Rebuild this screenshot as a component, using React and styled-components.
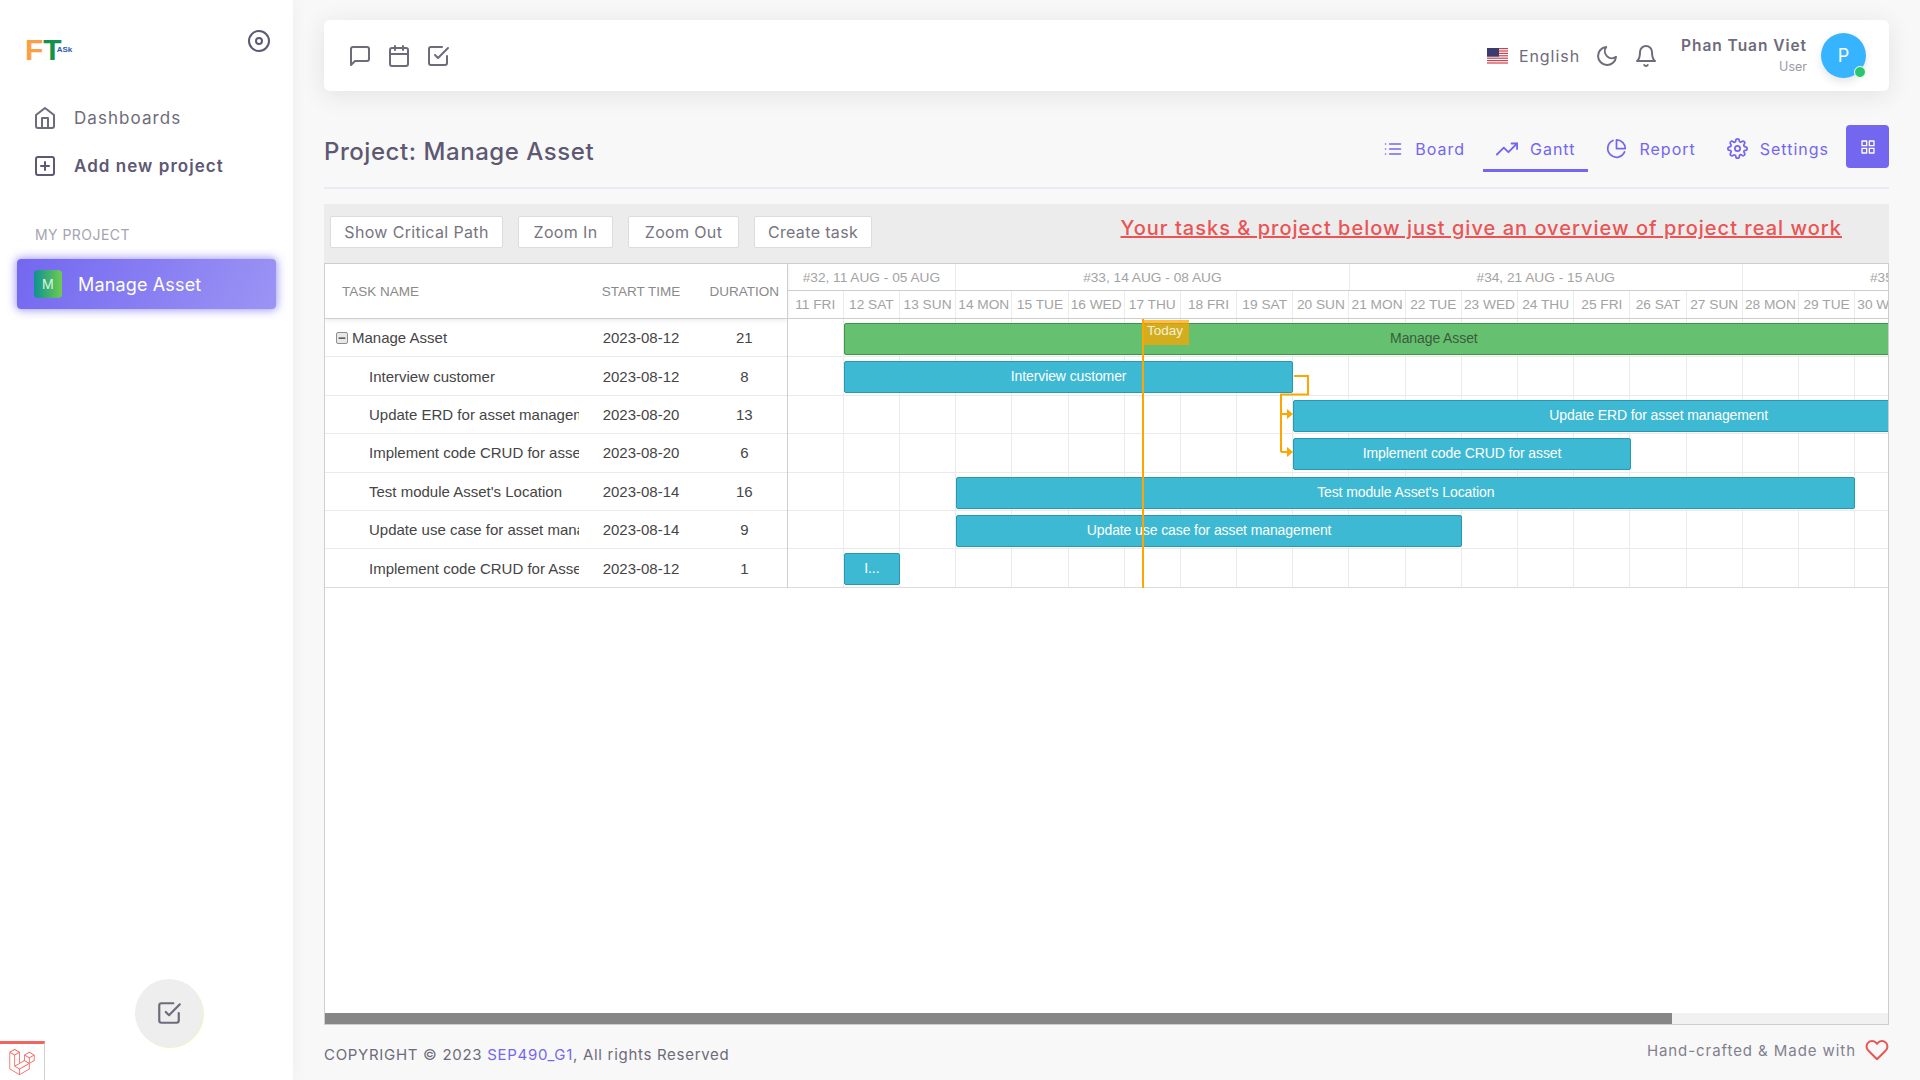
import React from 'react';
import styled, { createGlobalStyle } from 'styled-components';
import {
  FiDisc, FiHome, FiPlusSquare, FiCheckSquare, FiMessageSquare, FiCalendar,
  FiMoon, FiBell, FiList, FiTrendingUp, FiPieChart, FiSettings, FiGrid, FiHeart, FiMinus,
} from 'react-icons/fi';
import { FaLaravel } from 'react-icons/fa';

const COL = 56.2;
const ROW = 38.4;

const GlobalStyle = createGlobalStyle`
  html, body { margin: 0; padding: 0; height: 100%; }
  body {
    background: #f8f8f8;
    color: #6e6b7b;
    font-family: Inter, "Noto Sans", sans-serif;
    overflow: hidden;
  }
  * { box-sizing: border-box; }
`;

const Page = styled.div`
  display: flex;
  width: 1920px;
  height: 1080px;
  position: relative;
`;

const Sidebar = styled.aside`
  width: 293px;
  flex: none;
  background: #fff;
  box-shadow: 0 0 15px rgba(34, 41, 47, 0.05);
  display: flex;
  flex-direction: column;
  padding: 29px 17px 33px;
`;

const SidebarTop = styled.div`
  display: flex;
  justify-content: space-between;
  align-items: flex-start;
  padding: 0 5px 0 8px;
  height: 65px;
  color: #5e5873;
`;

const Logo = styled.div`
  display: flex;
  align-items: flex-end;
  height: 33px;
  font-family: "Liberation Sans", sans-serif;
  font-weight: 700;
  line-height: 24px;
`;

const LogoLetter = styled.span`
  font-size: ${p => p.$size}px;
  color: ${p => p.$color};
  margin-left: ${p => p.$shift || 0}px;
`;

const NavItem = styled.div`
  display: flex;
  align-items: center;
  height: 48px;
  padding-left: 16px;
  gap: 17px;
  font-size: 17px;
  letter-spacing: 1.05px;
  font-weight: ${p => (p.$bold ? 600 : 400)};
  color: ${p => (p.$bold ? '#5e5873' : '#6e6b7b')};
`;

const SectionLabel = styled.div`
  margin: 36px 0 0 18px;
  height: 33px;
  font-size: 14px;
  line-height: 18px;
  letter-spacing: 0.45px;
  color: #a6a4b0;
`;

const ActiveProject = styled.div`
  display: flex;
  align-items: center;
  height: 50px;
  padding-left: 17px;
  gap: 16px;
  border-radius: 4px;
  color: #fff;
  font-size: 18px;
  letter-spacing: 0.15px;
  background: linear-gradient(118deg, #7367f0, rgba(115, 103, 240, 0.7));
  box-shadow: 0 0 10px 1px rgba(115, 103, 240, 0.7);
`;

const ProjectBadge = styled.span`
  width: 28px;
  height: 28px;
  border-radius: 4px;
  display: flex;
  align-items: center;
  justify-content: center;
  font-size: 13px;
  color: #d8f5e4;
  background: linear-gradient(90deg, #0f9191, #6ecb4f);
`;

const FloatButton = styled.button`
  margin: auto 0 0 118px;
  width: 68px;
  height: 68px;
  border: none;
  border-radius: 50%;
  background: #eeeeee;
  color: #6e6b7b;
  display: flex;
  align-items: center;
  justify-content: center;
  box-shadow: 1px 1px 0 #f3f3c8;
`;

const DebugBadge = styled.div`
  position: absolute;
  left: 0;
  bottom: 0;
  width: 45px;
  height: 39px;
  background: #fff;
  border-top: 3px solid #f4645f;
  border-right: 1px solid #d1d1d1;
  color: #f4645f;
  display: flex;
  align-items: center;
  justify-content: center;
`;

const Main = styled.main`
  flex: 1;
  min-width: 0;
  padding: 20px 31px 0 31px;
  display: flex;
  flex-direction: column;
`;

const Navbar = styled.header`
  height: 71px;
  flex: none;
  background: #fff;
  border-radius: 6px;
  box-shadow: 0 4px 24px rgba(34, 41, 47, 0.1);
  display: flex;
  align-items: center;
  padding: 0 23px 0 24px;
  color: #6e6b7b;
`;

const NavIcons = styled.div`
  display: flex;
  gap: 15px;
  margin-right: auto;
`;

const FlagBox = styled.svg`
  display: block;
  margin-right: 11px;
`;

const LangLabel = styled.span`
  font-size: 16px;
  letter-spacing: 0.95px;
  margin-right: 15px;
`;

const IconGap = styled.span`
  display: flex;
  margin-right: ${p => p.$right}px;
`;

const UserBlock = styled.div`
  display: flex;
  flex-direction: column;
  align-items: flex-end;
  margin-right: 14px;
`;

const UserName = styled.span`
  font-size: 15.5px;
  font-weight: 600;
  letter-spacing: 0.95px;
  line-height: 22px;
  color: #6e6b7b;
`;

const UserRole = styled.span`
  font-size: 12.5px;
  line-height: 20px;
  color: #9c9aa6;
`;

const Avatar = styled.div`
  position: relative;
  width: 45px;
  height: 45px;
  border-radius: 50%;
  background: #37b4ff;
  color: #fff;
  font-size: 18px;
  display: flex;
  align-items: center;
  justify-content: center;
  box-shadow: 0 4px 8px rgba(34, 41, 47, 0.12);
`;

const StatusDot = styled.span`
  position: absolute;
  right: 0;
  bottom: 0;
  width: 12px;
  height: 12px;
  border-radius: 50%;
  background: #28c76f;
  border: 1px solid #fff;
`;

const TitleRow = styled.div`
  flex: none;
  height: 64px;
  margin-top: 34px;
  border-bottom: 2px solid #ebe9f1;
  display: flex;
  align-items: flex-start;
`;

const PageTitle = styled.h1`
  margin: 12px auto 0 0;
  font-size: 24px;
  line-height: 30px;
  font-weight: 500;
  letter-spacing: 0.55px;
  color: #5e5873;
`;

const Tabs = styled.nav`
  display: flex;
  gap: 5px;
  margin-right: 4px;
`;

const Tab = styled.div`
  height: 47px;
  padding: 3px 13px 0;
  display: flex;
  align-items: center;
  gap: 12px;
  color: #7367f0;
  font-size: 16px;
  letter-spacing: 1px;
  border-bottom: 3px solid ${p => (p.$active ? '#7367f0' : 'transparent')};
`;

const GridButton = styled.button`
  width: 43px;
  height: 43px;
  border: none;
  border-radius: 4px;
  background: #7367f0;
  color: #fff;
  display: flex;
  align-items: center;
  justify-content: center;
  padding: 0;
`;

const Toolbar = styled.div`
  flex: none;
  height: 59px;
  margin-top: 15px;
  background: #ececec;
  display: flex;
  align-items: flex-start;
  padding: 12px 47px 0 6px;
  gap: 15px;
`;

const ToolButton = styled.button`
  width: ${p => p.$width}px;
  height: 32px;
  padding: 0;
  background: #fff;
  border: 1px solid #dcdcdc;
  border-radius: 2px;
  font-family: inherit;
  font-size: 16px;
  letter-spacing: 0.35px;
  color: #77757f;
`;

const Notice = styled.a`
  margin-left: auto;
  font-size: 20px;
  line-height: 24px;
  font-weight: 500;
  letter-spacing: 1.01px;
  color: #ea5455;
  text-decoration: underline;
`;

const Gantt = styled.section`
  flex: none;
  height: 762px;
  background: #fff;
  border: 1px solid #cecece;
  display: flex;
  flex-direction: column;
  font-family: "Liberation Sans", Arial, sans-serif;
  overflow: hidden;
`;

const GanttBody = styled.div`
  flex: 1;
  min-height: 0;
  display: flex;
`;

const GridPane = styled.div`
  width: 461.6px;
  flex: none;
`;

const GridHead = styled.div`
  height: 55px;
  display: grid;
  grid-template-columns: 265px 102px 94.6px;
  align-items: center;
  border-bottom: 1px solid #cecece;
  box-shadow: 0 1px 5px rgba(0, 0, 0, 0.1);
  font-size: 13.5px;
  color: #8a8a8a;
`;

const HeadCell = styled.div`
  text-align: ${p => (p.$left ? 'left' : 'center')};
  padding-left: ${p => p.$indent || 0}px;
`;

const GridRow = styled.div`
  height: ${ROW}px;
  display: grid;
  grid-template-columns: 265px 102px 94.6px;
  align-items: center;
  border-bottom: 1px solid #ebebeb;
  font-size: 15px;
  color: #454545;

  &:nth-child(8) {
    border-bottom-color: #dcdcdc;
  }
`;

const NameCell = styled.div`
  display: flex;
  align-items: center;
  overflow: hidden;
  white-space: nowrap;
  margin-right: 11px;
  padding-left: ${p => (p.$root ? '11px' : '44px')};
`;

const Toggle = styled.span`
  flex: none;
  width: 12px;
  height: 12px;
  margin-right: 4px;
  border: 1px solid #8f8f8f;
  border-radius: 2px;
  background: #e8e8e8;
  color: #333;
  display: flex;
  align-items: center;
  justify-content: center;
`;

const ValueCell = styled.div`
  text-align: center;
  padding-left: ${p => p.$indent || 0}px;
`;

const Timeline = styled.div`
  flex: 1;
  min-width: 0;
  overflow: hidden;
`;

const ScaleRow = styled.div`
  display: flex;
  height: ${p => p.$height}px;
  border-left: 1px solid #cecece;
  border-bottom: 1px solid #cecece;
  font-size: 13.7px;
  color: #a3a3a3;
`;

const ScaleCell = styled.div`
  flex: none;
  width: ${p => p.$span * COL}px;
  border-right: 1px solid #ebebeb;
  display: flex;
  align-items: center;
  justify-content: center;
  white-space: nowrap;
`;

const Chart = styled.div`
  position: relative;
  border-left: 1px solid #cecece;
`;

const ChartRow = styled.div`
  position: relative;
  height: ${ROW}px;
  display: flex;
  border-bottom: 1px solid #ebebeb;

  &:nth-child(7) {
    border-bottom-color: #dcdcdc;
  }
`;

const ChartCell = styled.div`
  flex: none;
  width: ${COL}px;
  border-right: 1px solid #ebebeb;
`;

const Bar = styled.div`
  position: absolute;
  top: 4px;
  height: 32px;
  left: ${p => p.$start * COL}px;
  width: ${p => p.$span * COL}px;
  padding-bottom: 2px;
  border-radius: 2px;
  border: 1px solid ${p => (p.$project ? '#3c9445' : '#2898b0')};
  background: ${p => (p.$project ? '#65c16f' : '#3db9d3')};
  color: ${p => (p.$project ? '#3c5a3e' : '#fff')};
  font-size: 14px;
  letter-spacing: -0.1px;
  display: flex;
  align-items: center;
  justify-content: center;
  white-space: nowrap;
  overflow: hidden;
`;

const TodayLine = styled.div`
  position: absolute;
  top: 0;
  bottom: 0;
  left: 354.5px;
  width: 2px;
  background: #ffa500;
`;

const TodayLabel = styled.div`
  position: absolute;
  top: 1px;
  left: 354.5px;
  width: 47px;
  height: 25px;
  padding: 3px 0 0 5px;
  background: rgba(255, 165, 0, 0.72);
  color: #f4f0d8;
  font-size: 13.5px;
  line-height: 16px;
`;

const LinkLayer = styled.svg`
  position: absolute;
  left: 0;
  top: 0;
  pointer-events: none;
`;

const ScrollTrack = styled.div`
  flex: none;
  height: 11px;
  background: #f1f1f1;
`;

const ScrollThumb = styled.div`
  width: 1347px;
  height: 100%;
  background: #868686;
`;

const Footer = styled.footer`
  flex: 1;
  display: flex;
  justify-content: space-between;
  align-items: flex-start;
  padding-top: 20px;
  font-size: 15px;
  letter-spacing: 0.7px;
  color: #6e6b7b;
`;

const FooterLink = styled.span`
  color: #7367f0;
`;

const MadeWith = styled.span`
  display: flex;
  align-items: center;
  gap: 9px;
  margin-top: -7px;
  letter-spacing: 0.93px;
  color: #82808f;
`;

const HeartIcon = styled(FiHeart)`
  color: #ea5455;
`;

const weeks = [
  { label: '#32, 11 AUG - 05 AUG', span: 3 },
  { label: '#33, 14 AUG - 08 AUG', span: 7 },
  { label: '#34, 21 AUG - 15 AUG', span: 7 },
  { label: '#35, 28 AUG - 22 AUG', span: 7 },
];

const days = [
  '11 FRI', '12 SAT', '13 SUN', '14 MON', '15 TUE', '16 WED', '17 THU', '18 FRI', '19 SAT', '20 SUN',
  '21 MON', '22 TUE', '23 WED', '24 THU', '25 FRI', '26 SAT', '27 SUN', '28 MON', '29 TUE', '30 WED',
];

const tasks = [
  { name: 'Manage Asset', date: '2023-08-12', duration: 21, start: 1, span: 21, project: true },
  { name: 'Interview customer', date: '2023-08-12', duration: 8, start: 1, span: 8 },
  { name: 'Update ERD for asset management', date: '2023-08-20', duration: 13, start: 9, span: 13 },
  { name: 'Implement code CRUD for asset', date: '2023-08-20', duration: 6, start: 9, span: 6 },
  { name: "Test module Asset's Location", date: '2023-08-14', duration: 16, start: 3, span: 16 },
  { name: 'Update use case for asset management', date: '2023-08-14', duration: 9, start: 3, span: 9 },
  { name: 'Implement code CRUD for Asset', date: '2023-08-12', duration: 1, start: 1, span: 1, short: 'I...' },
];

function UsFlag() {
  const stripes = [0, 1, 2, 3, 4, 5, 6];
  return (
    <FlagBox width="21" height="16" viewBox="0 0 21 16">
      <rect width="21" height="16" fill="#fff" />
      {stripes.map(i => (
        <rect key={i} y={i * 2.4} width="21" height="1.2" fill="#c8434f" />
      ))}
      <rect width="12" height="8.6" fill="#3c3b6e" />
    </FlagBox>
  );
}

function DependencyLinks() {
  return (
    <LinkLayer width="560" height="268" fill="none">
      <path d="M506 57 H520 V75.5 H493 V133" stroke="#ffa500" strokeWidth="2" />
      <path d="M493 95 H500 M493 133 H500" stroke="#ffa500" strokeWidth="2" />
      <path d="M499 90 L505 95 L499 100 Z M499 128 L505 133 L499 138 Z" fill="#ffa500" />
    </LinkLayer>
  );
}

function GanttChart() {
  return (
    <Gantt>
      <GanttBody>
        <GridPane>
          <GridHead>
            <HeadCell $left $indent={17}>TASK NAME</HeadCell>
            <HeadCell>START TIME</HeadCell>
            <HeadCell $indent={10}>DURATION</HeadCell>
          </GridHead>
          {tasks.map(t => (
            <GridRow key={t.name}>
              <NameCell $root={t.project}>
                {t.project && (
                  <Toggle>
                    <FiMinus size={10} strokeWidth={3} />
                  </Toggle>
                )}
                {t.name}
              </NameCell>
              <ValueCell>{t.date}</ValueCell>
              <ValueCell $indent={10}>{t.duration}</ValueCell>
            </GridRow>
          ))}
        </GridPane>
        <Timeline>
          <ScaleRow $height={27}>
            {weeks.map(w => (
              <ScaleCell key={w.label} $span={w.span}>{w.label}</ScaleCell>
            ))}
          </ScaleRow>
          <ScaleRow $height={28}>
            {days.map(d => (
              <ScaleCell key={d} $span={1}>{d}</ScaleCell>
            ))}
          </ScaleRow>
          <Chart>
            {tasks.map(t => (
              <ChartRow key={t.name}>
                {days.map(d => (
                  <ChartCell key={d} />
                ))}
                <Bar $start={t.start} $span={t.span} $project={t.project}>{t.short || t.name}</Bar>
              </ChartRow>
            ))}
            <DependencyLinks />
            <TodayLine />
            <TodayLabel>Today</TodayLabel>
          </Chart>
        </Timeline>
      </GanttBody>
      <ScrollTrack>
        <ScrollThumb />
      </ScrollTrack>
    </Gantt>
  );
}

export default function App() {
  return (
    <Page>
      <GlobalStyle />
      <Sidebar>
        <SidebarTop>
          <Logo>
            <LogoLetter $size={30} $color="#fb9f45">F</LogoLetter>
            <LogoLetter $size={30} $color="#14914b">T</LogoLetter>
            <LogoLetter $size={8} $color="#2d5aa8" $shift={-5}>ASk</LogoLetter>
          </Logo>
          <FiDisc size={24} />
        </SidebarTop>
        <NavItem>
          <FiHome size={24} />
          Dashboards
        </NavItem>
        <NavItem $bold>
          <FiPlusSquare size={24} />
          Add new project
        </NavItem>
        <SectionLabel>MY PROJECT</SectionLabel>
        <ActiveProject>
          <ProjectBadge>M</ProjectBadge>
          Manage Asset
        </ActiveProject>
        <FloatButton>
          <FiCheckSquare size={26} />
        </FloatButton>
      </Sidebar>
      <DebugBadge>
        <FaLaravel size={26} />
      </DebugBadge>
      <Main>
        <Navbar>
          <NavIcons>
            <FiMessageSquare size={24} />
            <FiCalendar size={24} />
            <FiCheckSquare size={24} />
          </NavIcons>
          <UsFlag />
          <LangLabel>English</LangLabel>
          <IconGap $right={15}><FiMoon size={24} /></IconGap>
          <IconGap $right={23}><FiBell size={24} /></IconGap>
          <UserBlock>
            <UserName>Phan Tuan Viet</UserName>
            <UserRole>User</UserRole>
          </UserBlock>
          <Avatar>
            P
            <StatusDot />
          </Avatar>
        </Navbar>
        <TitleRow>
          <PageTitle>Project: Manage Asset</PageTitle>
          <Tabs>
            <Tab><FiList size={20} />Board</Tab>
            <Tab $active><FiTrendingUp size={22} />Gantt</Tab>
            <Tab><FiPieChart size={21} />Report</Tab>
            <Tab><FiSettings size={21} />Settings</Tab>
          </Tabs>
          <GridButton><FiGrid size={16} /></GridButton>
        </TitleRow>
        <Toolbar>
          <ToolButton $width={173}>Show Critical Path</ToolButton>
          <ToolButton $width={95}>Zoom In</ToolButton>
          <ToolButton $width={111}>Zoom Out</ToolButton>
          <ToolButton $width={118}>Create task</ToolButton>
          <Notice>Your tasks &amp; project below just give an overview of project real work</Notice>
        </Toolbar>
        <GanttChart />
        <Footer>
          <span>COPYRIGHT © 2023 <FooterLink>SEP490_G1</FooterLink>, All rights Reserved</span>
          <MadeWith>Hand-crafted &amp; Made with <HeartIcon size={24} /></MadeWith>
        </Footer>
      </Main>
    </Page>
  );
}
